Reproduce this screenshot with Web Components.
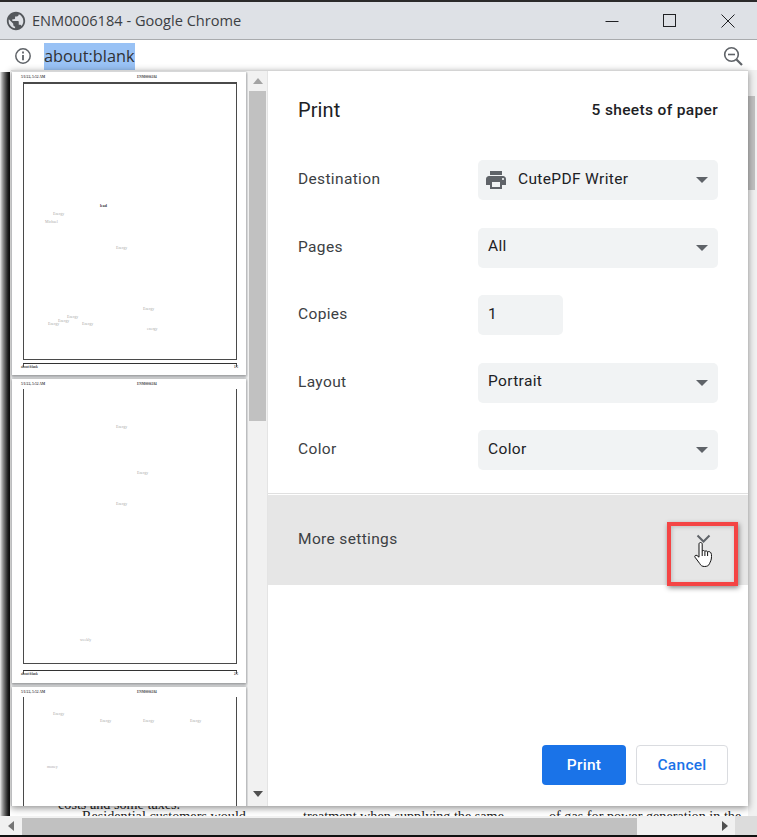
<!DOCTYPE html>
<html lang="en">
<head>
<meta charset="utf-8">
<title>ENM0006184 - Google Chrome</title>
<style>
  html,body{margin:0;padding:0;background:#fff}
  body{width:757px;height:837px;overflow:hidden;font-family:Roboto,sans-serif}
</style>
</head>
<body>
<chrome-window></chrome-window>
<script>
/* Title bar of the popup window */
class WinTitlebar extends HTMLElement {
  constructor() { super(); this.attachShadow({ mode: "open" }); }
  connectedCallback() {
    this.shadowRoot.innerHTML = `
      <style>
        :host{display:flex;align-items:center;height:37px;background:#dee1e6;border-bottom:1px solid #a9abae;padding-left:5px;font-family:"Open Sans",sans-serif;color:#3c4043}
        .globe{width:22px;height:22px;flex:none;fill:#54585c}
        .t{margin-left:5px;margin-top:-2px;font-size:14.6px;flex:1;white-space:nowrap}
        .btns{display:flex}
        .b{width:58px;height:37px;display:flex;align-items:center;justify-content:center}
        svg.i{width:20px;height:20px;fill:none;stroke:#202124;stroke-width:1}
      </style>
      <svg class="globe" viewBox="0 0 24 24"><path d="M12 2C6.48 2 2 6.48 2 12s4.48 10 10 10 10-4.48 10-10S17.52 2 12 2zm-1 17.93c-3.95-.49-7-3.85-7-7.93 0-.62.08-1.21.21-1.79L9 15v1c0 1.1.9 2 2 2v1.93zm6.9-2.54c-.26-.81-1-1.39-1.9-1.39h-1v-3c0-.55-.45-1-1-1H8v-2h2c.55 0 1-.45 1-1V7h2c1.1 0 2-.9 2-2v-.41c2.93 1.19 5 4.06 5 7.41 0 2.08-.8 3.97-2.1 5.39z"/></svg>
      <span class="t"><slot></slot></span>
      <div class="btns">
        <div class="b"><svg class="i" viewBox="0 0 20 20"><path d="M3.5 10.5h13"/></svg></div>
        <div class="b"><svg class="i" viewBox="0 0 20 20"><rect x="3.5" y="3.5" width="12" height="12"/></svg></div>
        <div class="b"><svg class="i" viewBox="0 0 20 20"><path d="M3.5 3.5l13 13M16.5 3.5l-13 13"/></svg></div>
      </div>`;
  }
}

/* Address row: info icon, selected url, zoom icon */
class WinAddressbar extends HTMLElement {
  constructor() { super(); this.attachShadow({ mode: "open" }); }
  connectedCallback() {
    this.shadowRoot.innerHTML = `
      <style>
        :host{display:flex;align-items:flex-start;height:30px;background:#fff;padding-left:14px;padding-right:13px;font-family:"Open Sans",sans-serif;color:#3c4043}
        .info{width:18px;height:18px;margin-top:7px;flex:none}
        .u{margin-left:12px;height:27px;line-height:26px;margin-top:3px;font-size:16.3px;background:#99c2f5;color:#303134}
        .sp{flex:1}
        .z{width:22px;height:22px;margin-top:5px;flex:none}
      </style>
      <svg class="info" viewBox="0 0 18 18" fill="none" stroke="#5f6368" stroke-width="1.5"><circle cx="9" cy="9" r="7.2"/><path d="M9 8v5.2" stroke-width="1.8"/><path d="M9 4.6v1.9" stroke-width="1.8"/></svg>
      <span class="u"><slot></slot></span>
      <span class="sp"></span>
      <svg class="z" viewBox="0 0 22 22" fill="none" stroke="#5f6368" stroke-width="1.6"><circle cx="9.5" cy="9.5" r="6.8"/><path d="M6 9.5h7"/><path d="M14.5 14.5l5.5 5.5" stroke-width="2.2"/></svg>`;
  }
}

/* Document behind the dialog: edge shadow, cut-off lines, scrollbars */
class BehindPage extends HTMLElement {
  constructor() { super(); this.attachShadow({ mode: "open" }); }
  connectedCallback() {
    this.shadowRoot.innerHTML = `
      <style>
        :host{display:flex;flex-direction:column;height:100%;background:#fff}
        .main{flex:1;display:flex;min-height:0}
        .edge{width:10px;flex:none;margin-top:2px;background:linear-gradient(90deg,#eee 0,#aaa 2px,#777 4px,#333 7px,#111 9px,#111 10px)}
        .text{flex:1;overflow:hidden;font:14.2px/12px "Liberation Serif",serif;color:#222;white-space:nowrap}
        .cols{display:grid;grid-template-columns:245px 246px 1fr;height:calc(100% + 6px);align-content:end;padding-left:48px;box-sizing:border-box}
        .cols div{height:12px}
        .in{padding-left:24px}
        .track{width:9px;flex:none;background:#f1f1f1;padding-top:26px;box-sizing:border-box}
        .vthumb{width:7px;height:94px;background:#c1c1c1}
        .h{height:19px;display:flex;background:#f1f1f1;flex:none}
        .arrow{width:22px;display:flex;align-items:center;justify-content:center;flex:none}
        .hthumb{width:615px;background:#c1c1c1;margin-top:2px}
        .sp{flex:1}
        .corner{width:22px;background:#dcdcdc;flex:none}
        .line{height:2px;background:#111;flex:none}
      </style>
      <div class="main">
        <div class="edge"></div>
        <div class="text"><div class="cols">
          <div>costs and some taxes.</div><div></div><div></div>
          <div class="in">Residential customers would</div><div>treatment when supplying the same</div><div>of gas for power generation in the</div>
        </div></div>
        <div class="track"><div class="vthumb"></div></div>
      </div>
      <div class="h">
        <div class="arrow"><svg width="6" height="10"><path d="M6 0v10L0 5z" fill="#757575"/></svg></div>
        <div class="hthumb"></div>
        <div class="sp"></div>
        <div class="arrow" style="width:20px"><svg width="6" height="10"><path d="M0 0v10l6-5z" fill="#505050"/></svg></div>
        <div class="corner"></div>
      </div>
      <div class="line"></div>`;
  }
}

/* One sheet in the preview column, scaled right down */
class PageThumb extends HTMLElement {
  constructor() { super(); this.attachShadow({ mode: "open" }); }
  connectedCallback() {
    const first = this.hasAttribute("first");
    const num = this.getAttribute("num") || "";
    const items = JSON.parse(this.getAttribute("items") || "[]");
    const marks = items.map(([x, y, t, dark]) => `<span class="m${dark ? " d" : ""}" style="left:${x}px;top:${y}px">${t}</span>`).join("");
    this.shadowRoot.innerHTML = `
      <style>
        :host{display:block;position:relative;width:234px;height:${this.getAttribute("h") || 303}px;background:#fff;box-shadow:0 1px 3px 1px rgba(60,64,67,.55);font-family:"Liberation Serif",serif;flex:none}
        .hd{position:absolute;top:3px;left:9px;right:0;display:flex;font-size:3.6px;line-height:5px;font-weight:700;color:#444}
        .hd b{position:absolute;left:116px;font-size:3.4px}
        .frame{position:absolute;left:11px;width:212px;top:10px;height:${first ? 275 : 274}px;border:solid #4a4a4a;border-width:${first ? "2px" : "0"} 1px 1.5px 1px}
        .box{position:absolute;left:11px;width:214px;top:291px;height:3px;border-top:1.5px solid #333;box-sizing:border-box}
        .box::before,.box::after{content:"";position:absolute;top:0;width:1px;height:3px;background:#555}
        .box::before{left:0}.box::after{right:0}
        .ft{position:absolute;top:293px;left:9px;width:217px;display:flex;justify-content:space-between;font-size:3.2px;line-height:5px;font-weight:700;color:#444}
        .m{position:absolute;font-size:3.9px;line-height:5px;color:#aaa;white-space:nowrap}
        .d{color:#333;font-weight:700}
      </style>
      <div class="hd"><span>5/1/22, 5:52 AM</span><b>ENM0006184</b></div>
      <div class="frame"></div>
      ${this.hasAttribute("cut") ? "" : `<div class="box"></div><div class="ft"><span>about:blank</span><span>${num}</span></div>`}
      ${marks}`;
  }
}

/* Left column of the dialog: sheets plus its own scrollbar */
class PreviewColumn extends HTMLElement {
  constructor() { super(); this.attachShadow({ mode: "open" }); }
  connectedCallback() {
    this.shadowRoot.innerHTML = `
      <style>
        :host{display:flex;width:257px;flex:none;background:#fff;overflow:hidden;border-right:1px solid #e4e4e4;box-sizing:border-box}
        .sheets{width:237px;flex:none;display:flex;flex-direction:column;gap:4px;padding:1px 0 0 1px;box-sizing:border-box;overflow:hidden}
        .bar{width:19px;flex:none;background:#f1f1f1;display:flex;flex-direction:column;align-items:center}
        .a{height:20px;flex:none;display:flex;align-items:center;justify-content:center}
        .th{width:17px;height:330px;background:#c1c1c1}
        .sp{flex:1}
      </style>
      <div class="sheets"><slot></slot></div>
      <div class="bar">
        <div class="a"><svg width="10" height="6"><path d="M0 6h10L5 0z" fill="#a3a3a3"/></svg></div>
        <div class="th"></div>
        <div class="sp"></div>
        <div class="a" style="height:24px"><svg width="10" height="6"><path d="M0 0h10L5 6z" fill="#505050"/></svg></div>
      </div>`;
  }
}

/* Label + control row */
class SettingRow extends HTMLElement {
  constructor() { super(); this.attachShadow({ mode: "open" }); }
  connectedCallback() {
    this.shadowRoot.innerHTML = `
      <style>
        :host{display:flex;align-items:center;height:40px;padding:0 30px;font-size:15.5px;color:#3c4043;letter-spacing:.35px}
        .l{width:180px;flex:none;margin-top:-2px}
        .c{flex:1;display:flex}
      </style>
      <span class="l">${this.getAttribute("label")}</span>
      <div class="c"><slot></slot></div>`;
  }
}

/* Grey select box; wide one with caret, or the small copies field */
class SelectBox extends HTMLElement {
  constructor() { super(); this.attachShadow({ mode: "open" }); }
  connectedCallback() {
    const icon = this.hasAttribute("printer");
    const plain = this.hasAttribute("plain");
    this.shadowRoot.innerHTML = `
      <style>
        :host{display:flex;align-items:center;height:40px;width:${plain ? 85 : 240}px;background:#f1f3f4;border-radius:5px;box-sizing:border-box;padding:0 10px;font-size:15.5px;color:#202124;letter-spacing:.35px}
        svg.p{width:24px;height:24px;fill:#5f6368;margin:0 10px 0 -4px;flex:none}
        .v{flex:1;white-space:nowrap;margin-top:-3px}
        svg.c{width:12px;height:6px;flex:none}
      </style>
      ${icon ? `<svg class="p" viewBox="0 0 24 24"><path d="M19 8H5c-1.66 0-3 1.34-3 3v6h4v4h12v-4h4v-6c0-1.66-1.34-3-3-3zm-3 11H8v-5h8v5zm3-7c-.55 0-1-.45-1-1s.45-1 1-1 1 .45 1 1-.45 1-1 1zm-1-9H6v4h12V3z"/></svg>` : ""}
      <span class="v"><slot></slot></span>
      ${plain ? "" : `<svg class="c" viewBox="0 0 12 6"><path d="M0 0h12L6 6z" fill="#5f6368"/></svg>`}`;
  }
}

/* "More settings" band with chevron, highlight box and pointer on top */
class MoreSettings extends HTMLElement {
  constructor() { super(); this.attachShadow({ mode: "open" }); }
  connectedCallback() {
    this.shadowRoot.innerHTML = `
      <style>
        :host{display:flex;position:relative;align-items:center;height:90px;background:#e6e6e6;padding:0 30px 3px;box-sizing:border-box;font-size:15.5px;color:#3c4043;letter-spacing:.35px}
        .chev{position:absolute;left:428px;top:39px;width:15px;height:10px}
        .box{position:absolute;left:399px;top:27px;width:71px;height:64px;box-sizing:border-box;border:4px solid #f44444;box-shadow:1px 2px 5px rgba(0,0,0,.45),inset 1px 1px 4px rgba(0,0,0,.18)}
        .hand{position:absolute;left:426px;top:47px;width:19px;height:25px}
      </style>
      <span><slot></slot></span>
      <div class="box"></div>
      <svg class="chev" viewBox="0 0 15 10" fill="none" stroke="#5f6368" stroke-width="2"><path d="M1.5 1.5L7.5 7.5l6-6"/></svg>
      <svg class="hand" viewBox="0 0 19 25"><path d="M6.5.5c1 0 1.7.7 1.7 1.6V9c.6-.7 2.2-.7 2.7.3.7-.6 2.2-.5 2.7.5.8-.5 2.5-.3 3.3 1 .6.9.6 2.2.6 3.7 0 3.9-1.2 5-2 7.2-.6 1.7-2.3 2.8-4.8 2.8-2.6 0-4-1-5-3L1 15.2c-.8-1.1.6-2.6 2-1.7l2 1.7V2.1C5 1.2 5.6.5 6.5.5z" fill="#fff" stroke="#111" stroke-width="1"/><path d="M8.2 9v5M10.9 9.3V14M13.6 10v4" fill="none" stroke="#111" stroke-width="1"/></svg>`;
  }
}

class PrintButton extends HTMLElement {
  constructor() { super(); this.attachShadow({ mode: "open" }); }
  connectedCallback() {
    const primary = this.hasAttribute("primary");
    this.shadowRoot.innerHTML = `
      <style>
        :host{display:flex;align-items:center;justify-content:center;height:40px;box-sizing:border-box;border-radius:4px;font-size:15.5px;font-weight:500;letter-spacing:.3px;width:${primary ? 84 : 92}px;
          ${primary ? "background:#1a73e8;color:#fff" : "background:#fff;color:#1a73e8;border:1px solid #dadce0"}}
      </style><slot></slot>`;
  }
}

/* Right column of the dialog */
class SettingsPanel extends HTMLElement {
  constructor() { super(); this.attachShadow({ mode: "open" }); }
  connectedCallback() {
    this.shadowRoot.innerHTML = `
      <style>
        :host{display:flex;flex-direction:column;flex:1;min-width:0;background:#fff;font-family:Roboto,sans-serif}
        .head{display:flex;align-items:center;justify-content:space-between;height:40px;margin:19px 0 30px;padding:0 30px}
        .head h1{margin:0;font-size:20px;font-weight:400;color:#202124;letter-spacing:.1px}
        .head span{font-size:15.5px;font-weight:500;color:#202124;letter-spacing:.35px}
        .rows{display:flex;flex-direction:column;gap:27.5px}
        .div{height:1px;background:#e0e0e0;margin-top:23px}
        .gap{height:1px}
        .sp{flex:1}
        .foot{display:flex;justify-content:flex-end;gap:10px;padding:0 20px 21px 0}
      </style>
      <div class="head"><h1>Print</h1><span>5 sheets of paper</span></div>
      <div class="rows">
        <slot name="rows"></slot>
      </div>
      <div class="div"></div><div class="gap"></div>
      <slot name="more"></slot>
      <div class="sp"></div>
      <div class="foot"><slot name="foot"></slot></div>`;
  }
}

/* Whole window */
class ChromeWindow extends HTMLElement {
  constructor() { super(); this.attachShadow({ mode: "open" }); }
  connectedCallback() {
    const p1 = [[88,131.5,"lead",1],[41,139.5,"Energy"],[33,147.5,"Michael"],[104,173.5,"Energy"],[131,234.5,"Energy"],[55,242.5,"Energy"],[46,246.5,"Energy"],[36,249.5,"Energy"],[70,249.5,"Energy"],[135,254.5,"energy"]];
    const p2 = [[104,46,"Energy"],[125,92,"Energy"],[104,123,"Energy"],[68,259,"weekly",0]];
    const p3 = [[41,25,"Energy"],[88,32,"Energy"],[131,32,"Energy"],[178,32,"Energy"],[35,78,"money"]];
    this.shadowRoot.innerHTML = `
      <style>
        :host{display:flex;flex-direction:column;width:757px;height:837px;background:#fff;box-sizing:border-box;border-top:2px solid #2a2a2a}
        .content{position:relative;flex:1;min-height:0}
        .dialog{position:absolute;left:11px;top:0;width:737px;height:735px;display:flex;background:#fff;border-top:1px solid #d4d4d4;box-shadow:0 2px 7px rgba(0,0,0,.45);overflow:hidden}
      </style>
      <win-titlebar>ENM0006184 - Google Chrome</win-titlebar>
      <win-addressbar>about:blank</win-addressbar>
      <div class="content">
        <behind-page></behind-page>
        <div class="dialog">
          <preview-column>
            <page-thumb first num="1/5" items='${JSON.stringify(p1)}'></page-thumb>
            <page-thumb num="2/5" h="304" items='${JSON.stringify(p2)}'></page-thumb>
            <page-thumb cut num="3/5" items='${JSON.stringify(p3)}'></page-thumb>
          </preview-column>
          <settings-panel>
            <div slot="rows" style="display:contents">
              <setting-row label="Destination"><select-box printer>CutePDF Writer</select-box></setting-row>
              <setting-row label="Pages"><select-box>All</select-box></setting-row>
              <setting-row label="Copies"><select-box plain>1</select-box></setting-row>
              <setting-row label="Layout"><select-box>Portrait</select-box></setting-row>
              <setting-row label="Color"><select-box>Color</select-box></setting-row>
            </div>
            <more-settings slot="more">More settings</more-settings>
            <print-button slot="foot" primary>Print</print-button>
            <print-button slot="foot">Cancel</print-button>
          </settings-panel>
        </div>
      </div>`;
  }
}

customElements.define("win-titlebar", WinTitlebar);
customElements.define("win-addressbar", WinAddressbar);
customElements.define("behind-page", BehindPage);
customElements.define("page-thumb", PageThumb);
customElements.define("preview-column", PreviewColumn);
customElements.define("setting-row", SettingRow);
customElements.define("select-box", SelectBox);
customElements.define("more-settings", MoreSettings);
customElements.define("print-button", PrintButton);
customElements.define("settings-panel", SettingsPanel);
customElements.define("chrome-window", ChromeWindow);
</script>
</body>
</html>
